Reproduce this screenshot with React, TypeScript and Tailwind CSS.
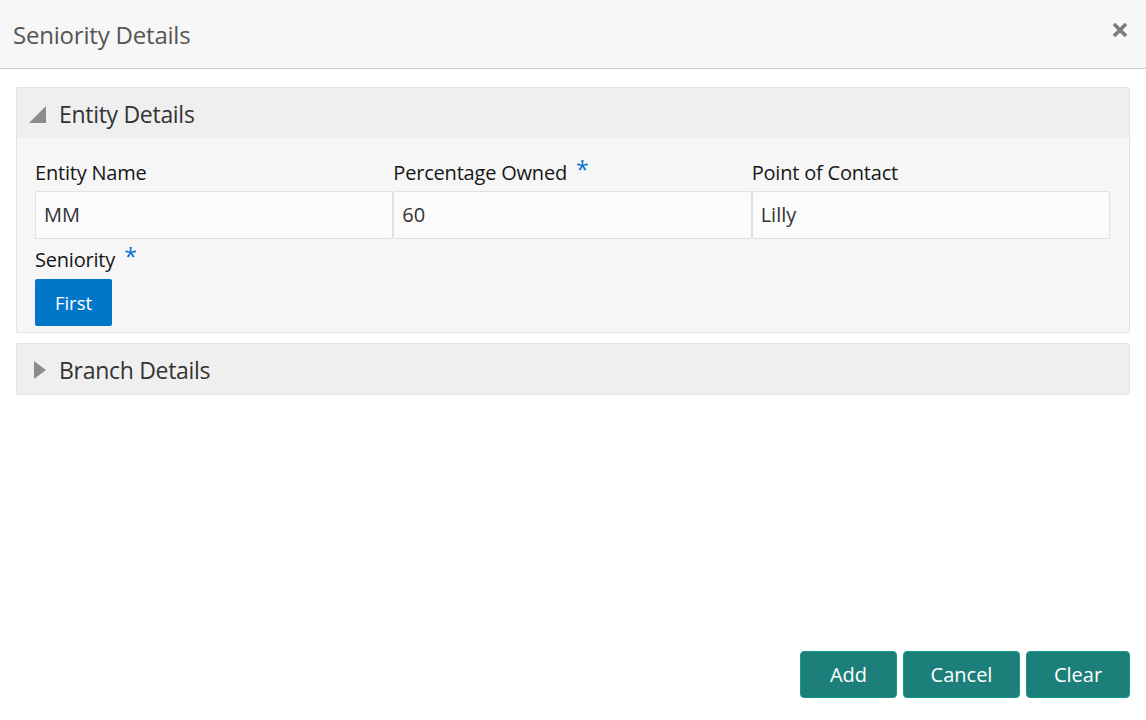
const fields = [
  { label: "Entity Name", value: "MM", required: false },
  { label: "Percentage Owned", value: "60", required: true },
  { label: "Point of Contact", value: "Lilly", required: false },
];

const Star = () => <span className="ml-[9px] text-[#0572ce] text-[23px] leading-none relative top-[-4px]">*</span>;

export default function App() {
  return (
    <div
      className="w-[1146px] h-[720px] bg-white flex flex-col text-[#161616]"
      style={{ fontFamily: '"Open Sans", "Noto Sans", sans-serif' }}
    >
      {/* header */}
      <div className="h-[69px] bg-[#f7f7f7] border-b border-[#cccccc] flex items-center justify-between pl-[13px] pr-[18px] shrink-0">
        <h1 className="text-[24px] text-[#555555] tracking-[-0.2px] mt-[1px]">Seniority Details</h1>
        <svg width="16" height="16" viewBox="0 0 16 16" className="mt-[-8px]">
          <path d="M2 2L14 14M14 2L2 14" stroke="#7b7b7b" strokeWidth="3.6" strokeLinecap="butt" />
        </svg>
      </div>

      <div className="flex-1 flex flex-col gap-[10px] px-[16px] pt-[18px]">
        {/* entity panel */}
        <div className="border border-[#e3e3e3] rounded-[2px] bg-[#f6f6f6]">
          <div className="h-[50px] bg-[#efefef] flex items-center pl-[12px] gap-[13px]">
            <svg width="17" height="17" viewBox="0 0 17 17" className="mt-[2px]">
              <polygon points="17,0 17,17 0,17" fill="#8c8c8c" />
            </svg>
            <span className="text-[23px] text-[#333333] tracking-[-0.3px] mt-[3px]">Entity Details</span>
          </div>
          <div className="pl-[18px] pr-[19px] pt-[22px] pb-[6px]">
            <div className="grid grid-cols-3">
              {fields.map((f) => (
                <div key={f.label} className="flex flex-col">
                  <label className="h-[26px] leading-[26px] text-[20px] tracking-[-0.2px] flex items-center">
                    {f.label}
                    {f.required && <Star />}
                  </label>
                  <div className="mt-[5px] h-[48px] bg-[#fbfbfb] border border-[#e1e1e1] rounded-[2px] flex items-center pl-[8px] text-[20px] text-[#333333]">
                    {f.value}
                  </div>
                </div>
              ))}
            </div>
            <label className="mt-[8px] h-[26px] leading-[26px] text-[20px] tracking-[-0.2px] flex items-center">
              Seniority
              <Star />
            </label>
            <button className="mt-[6px] w-[77px] h-[47px] bg-[#0177c8] rounded-[2px] text-white text-[18.5px]">
              First
            </button>
          </div>
        </div>

        {/* branch panel */}
        <div className="h-[52px] border border-[#e3e3e3] rounded-[2px] bg-[#efefef] flex items-center pl-[17px] gap-[13px]">
          <svg width="12" height="18" viewBox="0 0 12 18" className="mt-[2px]">
            <polygon points="0,0 12,9 0,18" fill="#8c8c8c" />
          </svg>
          <span className="text-[23px] text-[#333333] tracking-[-0.3px] mt-[3px]">Branch Details</span>
        </div>
      </div>

      {/* footer */}
      <div className="flex justify-end gap-[6px] pr-[16px] pb-[22px] shrink-0">
        <button className="w-[97px] h-[47px] bg-[#1d7f79] border border-[#129a8f] rounded-[4px] text-white text-[20px]">Add</button>
        <button className="w-[117px] h-[47px] bg-[#1d7f79] border border-[#129a8f] rounded-[4px] text-white text-[20px]">Cancel</button>
        <button className="w-[104px] h-[47px] bg-[#1d7f79] border border-[#129a8f] rounded-[4px] text-white text-[20px]">Clear</button>
      </div>
    </div>
  );
}
